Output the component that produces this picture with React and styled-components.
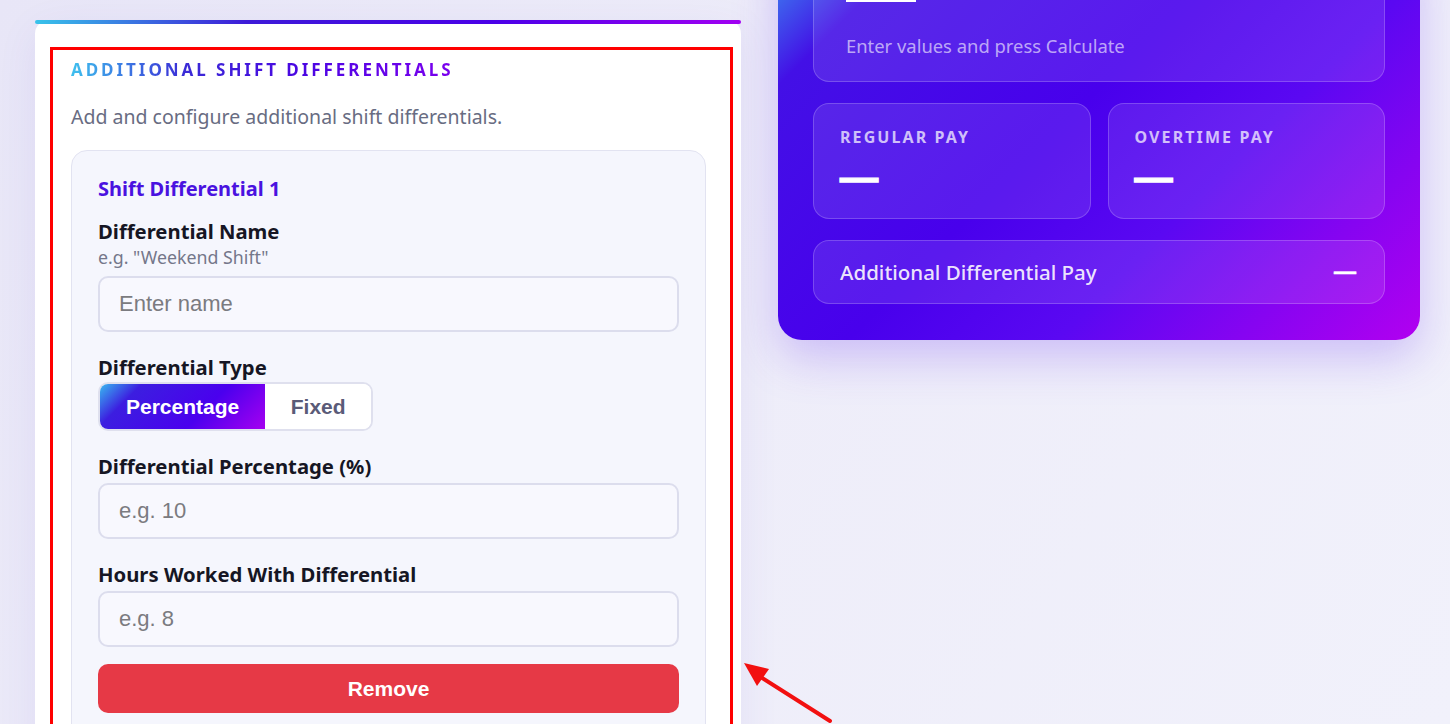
import React from 'react';
import styled, { createGlobalStyle } from 'styled-components';

// --- Datos ---
const fields = [
  { id: 'pct', label: 'Differential Percentage (%)', placeholder: 'e.g. 10' },
  { id: 'hours', label: 'Hours Worked With Differential', placeholder: 'e.g. 8' },
];

const GlobalStyle = createGlobalStyle`
  html, body { margin: 0; padding: 0; }
  body {
    background: linear-gradient(120deg, #e8e6f7 0%, #eeedf9 50%, #f1f1fb 100%);
    font-family: "Noto Sans", "Open Sans", sans-serif;
    overflow: hidden;
  }
`;

export default function App() {
  return (
    <>
      <GlobalStyle />
      <Page>
        <LeftCard>
          <Section>
            <Heading>Additional Shift Differentials</Heading>
            <Subtitle>Add and configure additional shift differentials.</Subtitle>
            <DiffCard>
              <DiffTitle>Shift Differential 1</DiffTitle>
              <Field>
                <LabelBlock>
                  <Label>Differential Name</Label>
                  <Hint>e.g. "Weekend Shift"</Hint>
                </LabelBlock>
                <Input type="text" placeholder="Enter name" />
              </Field>
              <Field $tight>
                <Label>Differential Type</Label>
                <Toggle>
                  <ToggleButton $active>Percentage</ToggleButton>
                  <ToggleButton>Fixed</ToggleButton>
                </Toggle>
              </Field>
              {fields.map(f => (
                <Field key={f.id}>
                  <Label>{f.label}</Label>
                  <Input type="number" placeholder={f.placeholder} />
                </Field>
              ))}
              <RemoveButton>Remove</RemoveButton>
            </DiffCard>
          </Section>
        </LeftCard>

        <ResultCard>
          <ResultMain>
            <MainValue />
            <ResultNote>Enter values and press Calculate</ResultNote>
          </ResultMain>
          <ResultGrid>
            <PayBox>
              <PayLabel>Regular Pay</PayLabel>
              <PayValue>—</PayValue>
            </PayBox>
            <PayBox>
              <PayLabel>Overtime Pay</PayLabel>
              <PayValue>—</PayValue>
            </PayBox>
          </ResultGrid>
          <DiffRow>
            <DiffRowLabel>Additional Differential Pay</DiffRowLabel>
            <DiffRowValue>—</DiffRowValue>
          </DiffRow>
        </ResultCard>

        <Arrow width="120" height="90" viewBox="0 0 120 90">
          <line x1="20" y1="20" x2="94" y2="67" stroke="#f21010" strokeWidth="4" strokeLinecap="round" />
          <polygon points="8,9 33,15 21,32" fill="#f21010" />
        </Arrow>
      </Page>
    </>
  );
}

// --- Estilos ---
const Page = styled.div`
  position: relative;
  display: grid;
  grid-template-columns: 706px 642px;
  column-gap: 37px;
  align-items: start;
  padding: 20px 0 0 35px;
  height: 724px;
  box-sizing: border-box;
  overflow: hidden;
`;

const LeftCard = styled.div`
  position: relative;
  background: #ffffff;
  border-radius: 14px 14px 0 0;
  padding: 27px 8px 0 15px;
  min-height: 760px;
  box-shadow: 0 10px 40px rgba(90, 70, 200, 0.08);
  &::before {
    content: "";
    position: absolute;
    top: 0; left: 0; right: 0;
    height: 4px;
    border-radius: 4px;
    background: linear-gradient(90deg, #38c3ea 0%, #3d1ad8 30%, #4a00e8 65%, #a100f2 100%);
  }
`;

const Section = styled.section`
  border: 3px solid #ff0000;
  border-bottom: none;
  padding: 9px 24px 0 18px;
  min-height: 740px;
`;

const Heading = styled.h2`
  display: inline-block;
  margin: 0;
  font-size: 17px;
  line-height: 22px;
  font-weight: 700;
  letter-spacing: 2.95px;
  text-transform: uppercase;
  background: linear-gradient(90deg, #3ec0ee 0%, #3a2ad6 30%, #4a06e2 60%, #7b00ee 100%);
  -webkit-background-clip: text;
  background-clip: text;
  color: transparent;
`;

const Subtitle = styled.p`
  margin: 23px 0 0;
  font-size: 19.5px;
  line-height: 26px;
  color: #686c82;
`;

const DiffCard = styled.div`
  margin-top: 20px;
  background: #f5f6fd;
  border: 1px solid #e2e3f1;
  border-radius: 16px;
  padding: 25px 26px 40px;
  display: flex;
  flex-direction: column;
  gap: 23px;
`;

const DiffTitle = styled.h3`
  margin: 0 0 -6px;
  font-size: 20px;
  line-height: 26px;
  font-weight: 700;
  color: #4a12e0;
`;

const Field = styled.div`
  display: flex;
  flex-direction: column;
  gap: ${({ $tight }) => ($tight ? '3px' : '5px')};
`;

const LabelBlock = styled.div`
  display: flex;
  flex-direction: column;
  gap: 4px;
  margin-bottom: 4px;
`;

const Label = styled.label`
  font-size: 20.3px;
  line-height: 24px;
  font-weight: 700;
  color: #161624;
`;

const Hint = styled.span`
  font-size: 17.8px;
  line-height: 20px;
  color: #74778a;
`;

const Input = styled.input`
  box-sizing: border-box;
  width: 100%;
  height: 56px;
  padding: 0 19px;
  border: 2px solid #dcdded;
  border-radius: 10px;
  background: #f8f8fe;
  font-family: "Liberation Sans", Arial, sans-serif;
  font-size: 22px;
  color: #222;
  outline: none;
  &::placeholder { color: #7b7b80; }
  &::-webkit-outer-spin-button, &::-webkit-inner-spin-button { -webkit-appearance: none; margin: 0; }
  -moz-appearance: textfield;
`;

const Toggle = styled.div`
  display: inline-flex;
  align-self: flex-start;
  border: 2px solid #dfe0ee;
  border-radius: 10px;
  overflow: hidden;
  background: #fff;
`;

const ToggleButton = styled.button`
  height: 45px;
  padding: 0 ${({ $active }) => ($active ? '26px' : '25.5px')};
  border: none;
  font-family: "Liberation Sans", Arial, sans-serif;
  font-size: 21px;
  font-weight: 700;
  cursor: pointer;
  color: ${({ $active }) => ($active ? '#ffffff' : '#5a5b78')};
  background: ${({ $active }) =>
    $active
      ? 'linear-gradient(135deg, #38b8f0 0%, #3c1ee0 20%, #4a00ee 62%, #a600f0 100%)'
      : '#ffffff'};
`;

const RemoveButton = styled.button`
  margin-top: -6px;
  height: 49px;
  width: 100%;
  border: none;
  border-radius: 10px;
  background: #e63946;
  color: #fff;
  font-family: "Liberation Sans", Arial, sans-serif;
  font-size: 21px;
  font-weight: 700;
  cursor: pointer;
`;

const ResultCard = styled.div`
  margin-top: -80px;
  padding: 35px 35px 36px;
  border-radius: 24px;
  background: linear-gradient(135deg, #3a9ef2 0%, #4310e6 14%, #4800ec 45%, #5a08f2 65%, #b200f0 100%);
  box-shadow: 0 18px 45px rgba(110, 60, 240, 0.28);
  display: flex;
  flex-direction: column;
  gap: 21px;
`;

const ResultMain = styled.div`
  padding: 20px 32px 22px;
  border: 1px solid rgba(255, 255, 255, 0.2);
  border-radius: 16px;
  background: rgba(255, 255, 255, 0.1);
`;

const MainValue = styled.div`
  width: 70px;
  height: 6px;
  background: #ffffff;
`;

const ResultNote = styled.p`
  margin: 31px 0 0;
  font-size: 18.4px;
  line-height: 26px;
  color: rgba(255, 255, 255, 0.62);
`;

const ResultGrid = styled.div`
  display: grid;
  grid-template-columns: 1fr 1fr;
  gap: 17px;
`;

const PayBox = styled.div`
  height: 116px;
  box-sizing: border-box;
  padding: 24px 26px 0;
  border: 1px solid rgba(255, 255, 255, 0.2);
  border-radius: 16px;
  background: rgba(255, 255, 255, 0.1);
`;

const PayLabel = styled.div`
  font-size: 16px;
  line-height: 18px;
  font-weight: 700;
  letter-spacing: 2.1px;
  text-transform: uppercase;
  color: rgba(255, 255, 255, 0.72);
`;

const PayValue = styled.div`
  margin-top: 12px;
  font-family: "Liberation Sans", Arial, sans-serif;
  font-size: 38px;
  line-height: 40px;
  font-weight: 700;
  color: #fff;
  -webkit-text-stroke: 1.4px #fff;
`;

const DiffRow = styled.div`
  height: 64px;
  box-sizing: border-box;
  padding: 0 28px 0 26px;
  display: flex;
  align-items: center;
  justify-content: space-between;
  border: 1px solid rgba(255, 255, 255, 0.2);
  border-radius: 16px;
  background: rgba(255, 255, 255, 0.1);
`;

const DiffRowLabel = styled.span`
  font-size: 20.5px;
  font-weight: 500;
  color: rgba(255, 255, 255, 0.9);
`;

const DiffRowValue = styled.span`
  font-family: "Liberation Sans", Arial, sans-serif;
  font-size: 22px;
  font-weight: 700;
  color: #fff;
  -webkit-text-stroke: 0.6px #fff;
`;

const Arrow = styled.svg`
  position: absolute;
  left: 736px;
  top: 654px;
  pointer-events: none;
`;
